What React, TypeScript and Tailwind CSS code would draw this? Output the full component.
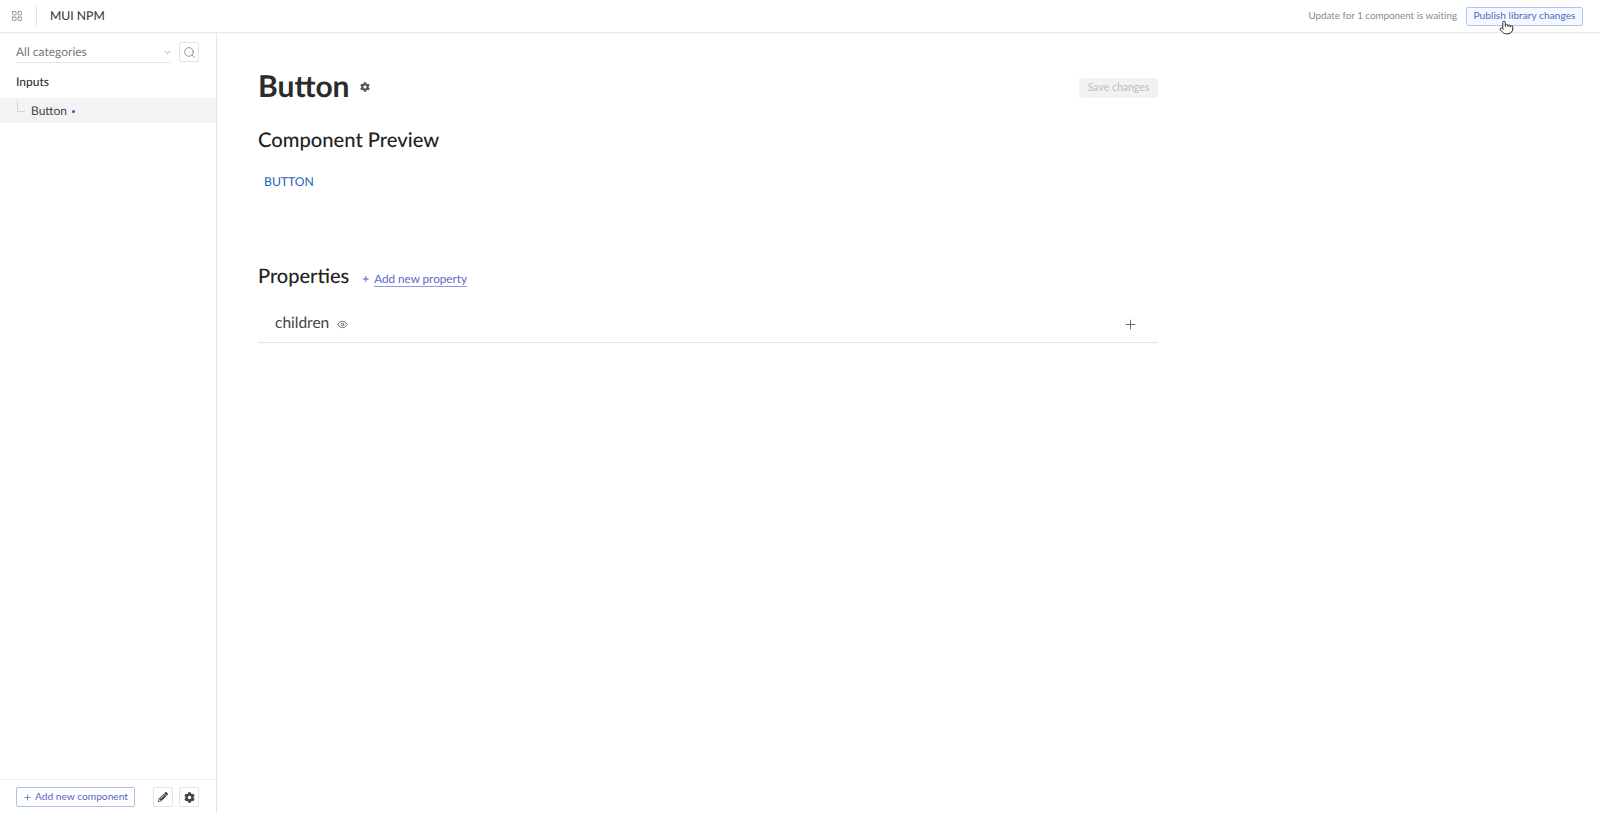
import React from 'react';
import { ChevronDown, Search, Eye, Plus, LayoutGrid, Pointer } from 'lucide-react';
import { FaCog, FaPencilAlt } from 'react-icons/fa';

const font = "font-['Lato','Open_Sans',sans-serif] [text-rendering:geometricPrecision]";

const IconButton = ({ children }: { children: React.ReactNode }) => (
  <button className="flex h-[20px] w-[20px] items-center justify-center rounded-[2px] border border-[#e3e3e3] bg-white text-[#444]">
    {children}
  </button>
);

const Sidebar = () => (
  <aside className="flex w-[217px] shrink-0 flex-col border-r border-[#e4e4e4]">
    <div className="flex items-start gap-[8px] pl-[16px] pt-[9px]">
      <div className="flex h-[21px] w-[155px] items-center justify-between border-b border-[#e6e6e6] text-[12px] text-[#777]">
        <span>All categories</span>
        <ChevronDown size={9} className="-mr-[1px] text-[#888]" />
      </div>
      <IconButton>
        <Search size={13} strokeWidth={1.25} className="text-[#666]" />
      </IconButton>
    </div>
    <div className="pl-[16px] pt-[11px] text-[12px] font-medium leading-[16px] text-[#333]">Inputs</div>
    <div className="relative mt-[8px] flex h-[25px] items-center bg-[#f3f3f3] pl-[31px] text-[12px] text-[#444]">
      <span className="absolute left-[17px] top-[3px] h-[11px] w-[8px] border-b border-l border-[#d4d4d4]" />
      <span>Button</span>
      <span className="ml-[5px] mt-[2px] h-[3px] w-[3px] rounded-full bg-[#2a5bd0]" />
    </div>
    <div className="mt-auto flex h-[34px] items-start border-t border-[#eeeeee] pl-[16px] pt-[7px]">
      <button className="flex h-[20px] w-[119px] items-center justify-center gap-[3px] whitespace-nowrap rounded-[2px] border border-[#a9c1e8] bg-white text-[10.2px] text-[#5468c8]">
        <Plus size={9} strokeWidth={2} />
        <span>Add new component</span>
      </button>
      <div className="ml-[18px] flex gap-[6px]">
        <IconButton>
          <FaPencilAlt size={10} />
        </IconButton>
        <IconButton>
          <FaCog size={11} />
        </IconButton>
      </div>
    </div>
  </aside>
);

const Main = () => (
  <main className="w-[941px] pl-[41px] pt-[31px]">
    <div className="flex h-[44px] items-center justify-between">
      <div className="flex items-center">
        <h1 className="text-[30px] font-bold leading-[44px] text-[#2b2b2b]">Button</h1>
        <FaCog size={10} className="ml-[10px] mt-[2px] text-[#555]" />
      </div>
      <button className="mt-[3px] h-[20px] w-[79px] whitespace-nowrap rounded-[2px] bg-[#f2f2f2] text-[10.5px] text-[#bdbdbd]">Save changes</button>
    </div>
    <h2 className="mt-[18px] text-[20.2px] font-medium leading-[28px] text-[#222]">Component Preview</h2>
    <div className="mt-[19px] pl-[6px] text-[12.2px] leading-[18px] text-[#1d5fb8]">BUTTON</div>
    <div className="mt-[71px] flex items-center">
      <h2 className="text-[20px] font-medium leading-[28px] text-[#222]">Properties</h2>
      <span className="ml-[13px] mt-[6px] text-[12px] text-[#5468c8]">+</span>
      <a className="ml-[5px] mt-[6px] border-b border-[#8d9bdc] text-[11.7px] leading-[14px] text-[#5468c8]">Add new property</a>
    </div>
    <div className="mt-[16px] flex h-[37px] items-center border-b border-[#e3e3e3] pl-[17px] pr-[20px]">
      <span className="text-[15.5px] text-[#444]">children</span>
      <Eye size={11} strokeWidth={1.75} className="ml-[8px] text-[#555]" />
      <Plus size={15} strokeWidth={1.25} className="ml-auto text-[#444]" />
    </div>
  </main>
);

export default function App() {
  return (
    <div className={`relative flex h-[813px] w-[1600px] flex-col overflow-hidden bg-white ${font}`}>
      <header className="flex h-[33px] shrink-0 items-center border-b border-[#e9e9e9] shadow-[0_1px_2px_rgba(0,0,0,0.03)]">
        <LayoutGrid size={12} strokeWidth={1.25} className="ml-[11px] text-[#666]" />
        <span className="ml-[13px] h-[22px] w-px bg-[#e4e4e4]" />
        <span className="ml-[13px] text-[12.2px] text-[#333]">MUI NPM</span>
        <span className="ml-auto text-[9.8px] text-[#8a8a8a]">Update for 1 component is waiting</span>
        <button className="ml-[9px] mr-[17px] h-[19px] w-[117px] whitespace-nowrap rounded-[2px] border border-[#a9c8ef] bg-[#f5f9ff] pb-[2px] text-[10.2px] leading-[14px] text-[#5468c8]">
          Publish library changes
        </button>
      </header>
      <div className="flex min-h-0 flex-1">
        <Sidebar />
        <Main />
      </div>
      <Pointer size={15} fill="white" strokeWidth={1.5} className="absolute left-[1499px] top-[20px] text-[#222]" />
    </div>
  );
}
